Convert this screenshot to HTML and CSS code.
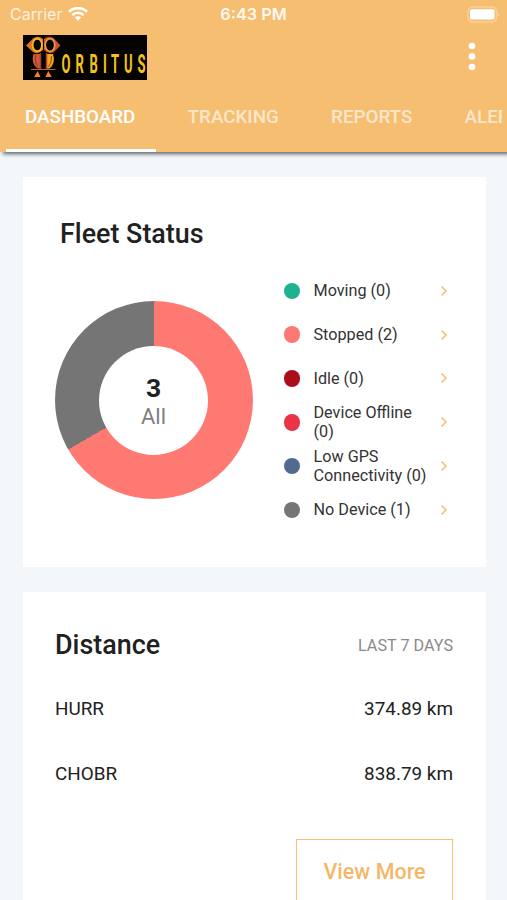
FILE: index.html
```html
<!DOCTYPE html>
<html lang="en">
<head>
  <meta charset="UTF-8">
  <meta name="viewport" content="width=device-width, initial-scale=1.0">
  <title>Orbitus Dashboard</title>
  <link rel="stylesheet" href="styles.css">
</head>
<body>

  <header class="header">
    <!-- Status bar -->
    <div class="status-bar">
      <div class="carrier">
        <span>Carrier</span>
        <svg class="wifi" width="20" height="14" viewBox="0 0 20 14">
          <path d="M1 4.7a13 13 0 0 1 18 0" fill="none" stroke="#fff" stroke-width="2.7"/>
          <path d="M4.3 8.1a8.2 8.2 0 0 1 11.4 0" fill="none" stroke="#fff" stroke-width="2.6"/>
          <path d="M6.8 10.5a4.6 4.6 0 0 1 6.4 0L10 13.8z" fill="#fff"/>
        </svg>
      </div>
      <span class="time">6:43 PM</span>
      <svg class="battery" width="34" height="17" viewBox="0 0 34 17">
        <rect x="1" y="1" width="28.500" height="15" rx="4.5" fill="none" stroke="#fff" stroke-opacity=".3" stroke-width="1.6"/>
        <rect x="3" y="3.3" width="24.500" height="10.2" rx="1.5" fill="#fff"/>
        <path d="M31 6.5q2 2 0 4z" fill="#fff" fill-opacity=".4"/>
      </svg>
    </div>

    <!-- Logo and menu -->
    <div class="toolbar">
      <svg class="logo" width="124" height="45" viewBox="0 0 124 45">
        <rect width="124" height="45" fill="#050302"/>
        <!-- owl eyes -->
        <path d="M3 10.5 10 3.5Q15 0 20 4V15Q15 20 10 17z" fill="#dd7426"/>
        <path d="M37.5 10.5 31 3.5Q26 0 21 4V15Q26 20 31 17z" fill="#cf512d"/>
        <ellipse cx="14.3" cy="10" rx="4.7" ry="6.3" fill="#050302" stroke="#f5b41f" stroke-width="1.9"/>
        <ellipse cx="27" cy="10" rx="4.7" ry="6.3" fill="#050302" stroke="#ee9a48" stroke-width="1.6"/>
        <!-- wings and body -->
        <path d="M10.5 19h6.500v14.500h-2.500Q7.500 28 10.500 19z" fill="#d0583a"/>
        <path d="M30 19h-6v14.500h2.500Q33 28 30 19z" fill="#f2a51d"/>
        <path d="M12.800 19.500Q11.500 27 15 32M28.500 21Q29 27 25.500 32" fill="none" stroke="#7c2c1e" stroke-width=".8"/>
        <path d="M17.500 18v16M23.500 18v16" stroke="#a5432d" stroke-width="1.5"/>
        <path d="M8 34.5h24.500" stroke="#c55a2b" stroke-width="1"/>
        <path d="M14.800 36l2.700 6h-6.500zM25.300 36l3.500 6h-6.500z" fill="#ee8225"/>
        <g class="logo-text" transform="translate(0 38.300) scale(.5 1)">
          <text x="77" y="0">O</text>
          <text x="105" y="0">R</text>
          <text x="133" y="0">B</text>
          <text x="160" y="0">I</text>
          <text x="176" y="0">T</text>
          <text x="202" y="0">U</text>
          <text x="229" y="0">S</text>
        </g>
      </svg>
      <svg class="menu" width="8" height="30" viewBox="0 0 8 30">
        <circle cx="4" cy="4" r="3.3" fill="#fff"/>
        <circle cx="4" cy="14.5" r="3.3" fill="#fff"/>
        <circle cx="4" cy="25" r="3.3" fill="#fff"/>
      </svg>
    </div>

    <!-- Tabs -->
    <nav class="tabs">
      <a class="tab active">DASHBOARD</a>
      <a class="tab">TRACKING</a>
      <a class="tab">REPORTS</a>
      <a class="tab">ALERTS</a>
    </nav>
  </header>

  <main class="content">
    <!-- Fleet status -->
    <section class="card fleet">
      <h2 class="fleet-title">Fleet Status</h2>
      <div class="fleet-body">
        <div class="donut">
          <div class="donut-hole">
            <span class="total">3</span>
            <span class="total-label">All</span>
          </div>
        </div>
        <ul class="legend">
          <li><span class="dot moving"></span><span class="label">Moving (0)</span><svg class="chevron" viewBox="0 0 8 12"><path d="M1.5 1.5 6 6l-4.5 4.5"/></svg></li>
          <li><span class="dot stopped"></span><span class="label">Stopped (2)</span><svg class="chevron" viewBox="0 0 8 12"><path d="M1.5 1.5 6 6l-4.5 4.5"/></svg></li>
          <li><span class="dot idle"></span><span class="label">Idle (0)</span><svg class="chevron" viewBox="0 0 8 12"><path d="M1.5 1.5 6 6l-4.5 4.5"/></svg></li>
          <li><span class="dot offline"></span><span class="label">Device Offline<br>(0)</span><svg class="chevron" viewBox="0 0 8 12"><path d="M1.5 1.5 6 6l-4.5 4.5"/></svg></li>
          <li><span class="dot low-gps"></span><span class="label">Low GPS<br>Connectivity (0)</span><svg class="chevron" viewBox="0 0 8 12"><path d="M1.5 1.5 6 6l-4.5 4.5"/></svg></li>
          <li><span class="dot no-device"></span><span class="label">No Device (1)</span><svg class="chevron" viewBox="0 0 8 12"><path d="M1.5 1.5 6 6l-4.5 4.5"/></svg></li>
        </ul>
      </div>
    </section>

    <!-- Distance -->
    <section class="card distance">
      <div class="distance-head">
        <h2>Distance</h2>
        <span class="period">LAST 7 DAYS</span>
      </div>
      <div class="row"><span>HURR</span><span class="km">374.89 km</span></div>
      <div class="row"><span>CHOBR</span><span class="km">838.79 km</span></div>
      <button class="view-more">View More</button>
    </section>
  </main>

</body>
</html>
```
FILE: styles.css
```css
/* General Styles */
* {
  box-sizing: border-box;
}

body {
  margin: 0;
  height: 900px;
  overflow: hidden;
  display: flex;
  flex-direction: column;
  background: #f3f7fa;
  font-family: Roboto, sans-serif;
  color: #212121;
}

h2 {
  margin: 0;
  font-size: 26.9px;
  line-height: 30px;
  font-weight: 500;
}

/* Header */
.header {
  flex: none;
  height: 152px;
  background: #f5be71;
  color: #fff;
  box-shadow: 3px 2px 4px rgba(40, 50, 55, 0.75);
}

.status-bar {
  display: grid;
  grid-template-columns: 1fr auto 1fr;
  align-items: center;
  height: 30px;
  padding: 0 6px 2px 10px;
  font-family: Inter, sans-serif;
  font-size: 16px;
}

.carrier {
  display: flex;
  align-items: center;
  gap: 6px;
  color: rgba(255, 255, 255, 0.8);
}

.time {
  margin-right: 4px;
  font-size: 16.3px;
  font-weight: 600;
  color: rgba(255, 255, 255, 0.92);
}

.battery {
  justify-self: end;
}

.toolbar {
  display: flex;
  justify-content: space-between;
  height: 53px;
  padding: 5px 31px 0 23px;
}

.logo-text {
  font-family: Roboto, sans-serif;
  font-size: 26px;
  font-weight: 700;
  fill: #f4c21c;
}

.menu {
  margin-top: 7px;
}

/* Tabs */
.tabs {
  display: flex;
  gap: 52.3px;
  height: 69px;
  margin: 0 5.5px 0 6px;
  overflow: hidden;
}

.tab {
  flex: none;
  padding-top: 23px;
  font-size: 18.8px;
  line-height: 22px;
  font-weight: 500;
  color: rgba(255, 255, 255, 0.65);
}

.tab.active {
  width: 149.5px;
  margin-right: -20.2px;
  padding-left: 19px;
  color: #fff;
  border-bottom: 3px solid #fff;
}

/* Cards */
.content {
  flex: none;
  display: flex;
  flex-direction: column;
  gap: 25px;
  padding: 25px 21px 0 22.5px;
}

.card {
  background: #fff;
  border-radius: 2px;
}

/* Fleet Status */
.fleet {
  height: 390px;
  padding: 42px 33px 0 32px;
}

.fleet-title {
  padding-left: 5.5px;
}

.fleet-body {
  display: flex;
  align-items: flex-start;
  margin-top: 20px;
}

.donut {
  display: flex;
  align-items: center;
  justify-content: center;
  width: 198px;
  height: 198px;
  margin-top: 32px;
  border-radius: 50%;
  background: conic-gradient(#ff7973 0 66.67%, #757575 66.67% 100%);
}

.donut-hole {
  display: flex;
  flex-direction: column;
  align-items: center;
  justify-content: center;
  width: 109px;
  height: 109px;
  padding-top: 2px;
  border-radius: 50%;
  background: #fff;
}

.total {
  font-size: 26.5px;
  line-height: 30px;
  font-weight: 700;
}

.total-label {
  font-size: 22px;
  line-height: 27px;
  color: #808080;
}

.legend {
  flex: 1;
  margin: 0 0 0 31px;
  padding: 0;
  list-style: none;
}

.legend li {
  display: flex;
  align-items: center;
  height: 43.8px;
  font-size: 16.2px;
  line-height: 19px;
  color: #333;
}

.dot {
  width: 16.5px;
  height: 16.5px;
  margin-right: 13.5px;
  border-radius: 50%;
}

.label {
  flex: 1;
  white-space: nowrap;
}

.chevron {
  width: 8px;
  height: 12px;
  margin-right: 5px;
  fill: none;
  stroke: #f5be71;
  stroke-width: 1.6;
}

.moving { background: #20b28e; }
.stopped { background: #fc7873; }
.idle { background: #ab0e1a; }
.offline { background: #e93448; }
.low-gps { background: #526a90; }
.no-device { background: #757575; }

/* Distance */
.distance {
  height: 316px;
  padding: 38px 33px 0 32.5px;
}

.distance-head,
.row {
  display: flex;
  align-items: center;
  justify-content: space-between;
}

.distance-head {
  height: 30px;
  margin-bottom: 16px;
}

.period {
  font-size: 16.2px;
  color: #8a8a8a;
}

.row {
  height: 65.3px;
  font-size: 18.9px;
}

/* the button runs on under the bottom of the screen */
.view-more {
  display: block;
  width: 157px;
  height: 66px;
  margin: 32px 0 0 auto;
  border: 1.5px solid #f5be71;
  background: #fff;
  color: #f3b867;
  font-family: inherit;
  font-size: 21.5px;
  font-weight: 500;
}
```
